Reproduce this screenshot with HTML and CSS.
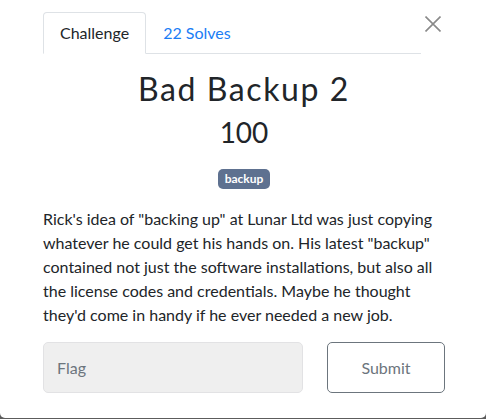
FILE: index.html
```html
<!DOCTYPE html>
<html>
<head>
<meta charset="utf-8">
<link rel="stylesheet" href="styles.css">
</head>
<body>
<div class="modal">
  <div class="header">
    <ul class="nav">
      <li class="tab active">Challenge</li>
      <li class="tab link">22 Solves</li>
    </ul>
    <button class="close" aria-label="Close">
      <svg width="16" height="16" viewBox="0 0 16 16"><path d="M0.5 0.5L15.5 15.5M15.5 0.5L0.5 15.5" stroke="#8a8a8a" stroke-width="1.6" fill="none"/></svg>
    </button>
  </div>
  <div class="content">
    <h2 class="name">Bad Backup 2</h2>
    <h3 class="value">100</h3>
    <div class="tags"><span class="badge">backup</span></div>
    <p class="desc">Rick's idea of "backing up" at Lunar Ltd was just copying whatever he could get his hands on. His latest "backup" contained not just the software installations, but also all the license codes and credentials. Maybe he thought they'd come in handy if he ever needed a new job.</p>
    <div class="form">
      <input class="flag" type="text" placeholder="Flag">
      <button class="submit">Submit</button>
    </div>
  </div>
</div>
</body>
</html>
```

FILE: styles.css
```css
html, body {
  margin: 0;
  padding: 0;
}
body {
  background: #5c5c5c;
  font-family: Lato, "Open Sans", sans-serif;
  color: #212529;
}
.modal {
  background: #fff;
  height: 418px;
  border-radius: 0 0 5px 5px;
  overflow: hidden;
}
.header {
  display: flex;
  align-items: flex-start;
  padding: 12px 0 0 43px;
}
.nav {
  display: flex;
  list-style: none;
  margin: 0;
  padding: 0;
  width: 378px;
  border-bottom: 1px solid #dee2e6;
}
.tab {
  font-size: 16px;
  line-height: 24px;
  padding: 8px 16px;
  border: 1px solid transparent;
  border-radius: 4px 4px 0 0;
  margin-bottom: -1px;
}
.tab.active {
  border-color: #dee2e6 #dee2e6 #fff;
  background: #fff;
  color: #212529;
}
.tab.link {
  color: #1a7df5;
}
.close {
  margin: 4px 0 0 4px;
  padding: 0;
  border: 0;
  background: none;
  width: 16px;
  height: 16px;
  display: block;
}
.close svg {
  display: block;
}
.content {
  padding: 0 41px 0 43px;
}
.name {
  text-align: center;
  font-weight: 400;
  font-size: 32px;
  line-height: 1.2;
  letter-spacing: 1.6px;
  margin: 0 0 8px;
  padding-top: 16px;
}
.value {
  text-align: center;
  font-weight: 400;
  font-size: 28px;
  line-height: 1.2;
  margin: 0;
}
.tags {
  display: flex;
  justify-content: center;
  margin-top: 19px;
}
.badge {
  display: inline-block;
  background: #5e7190;
  color: #fff;
  font-weight: 700;
  font-size: 12px;
  line-height: 20px;
  height: 20px;
  padding: 0 7px;
  border-radius: 5px;
}
.desc {
  font-size: 16px;
  line-height: 24px;
  margin: 18px 0 15px;
}
.form {
  display: grid;
  grid-template-columns: 260px 1fr;
  gap: 24px;
}
.flag {
  box-sizing: border-box;
  height: 51px;
  border: 1px solid #e2e2e4;
  background: #efefef;
  border-radius: 5px;
  padding: 0 13px;
  font-family: Lato, sans-serif;
  font-size: 16px;
  color: #495057;
  outline: none;
}
.flag::placeholder {
  color: #6c757d;
}
.submit {
  box-sizing: border-box;
  height: 51px;
  border: 1px solid #6c757d;
  background: #fff;
  border-radius: 5px;
  font-family: Lato, sans-serif;
  font-size: 16px;
  color: #6c757d;
}
```
